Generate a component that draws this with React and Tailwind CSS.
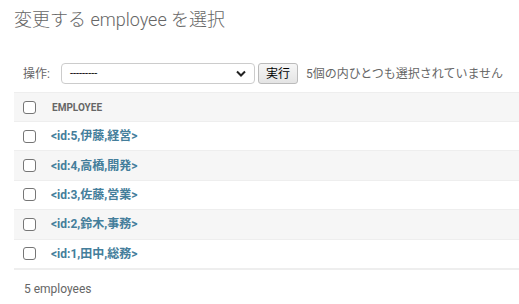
const rows = [
  "<id:5,伊藤,経営>",
  "<id:4,高橋,開発>",
  "<id:3,佐藤,営業>",
  "<id:2,鈴木,事務>",
  "<id:1,田中,総務>",
];

function Box() {
  return <span className="block w-[13px] h-[13px] rounded-[3px] border border-[#767676] bg-white" />;
}

export default function App() {
  return (
    <div className="w-[519px] h-[304px] overflow-hidden bg-white font-['Roboto','Noto_Sans_CJK_JP',sans-serif] text-[12px] text-[#333]">
      <div className="pl-[14px] pt-[9px]">
        <h1 className="text-[18px] leading-[22px] font-light text-[#666] whitespace-nowrap">変更する employee を選択</h1>
      </div>
      <div className="pl-[14px] mt-[32px]">
        <div className="flex items-center h-[21px] pl-[9px] whitespace-nowrap">
          <span className="shrink-0 text-[#666] mr-[11px]">操作:</span>
          <div className="shrink-0 flex items-center justify-between w-[194px] h-[21px] border border-[#ccc] rounded-[4px] px-[8px]">
            <span className="text-[11px] text-black leading-none">---------</span>
            <svg width="10" height="7" viewBox="0 0 10 7">
              <path d="M1 1.5 5 5.5 9 1.5" fill="none" stroke="#222" strokeWidth="2" />
            </svg>
          </div>
          <button className="shrink-0 ml-[3px] h-[21px] w-[40px] border border-[#bbb] rounded-[3px] bg-gradient-to-b from-[#f6f6f6] to-[#e4e4e4] text-black text-[12px] leading-none">実行</button>
          <span className="shrink-0 ml-[8px] text-[#666]">5個の内ひとつも選択されていません</span>
        </div>
        <div className="mt-[8px]">
          <div className="flex items-center h-[30px] bg-[#f6f6f6] border-t border-b border-[#eee]">
            <span className="pl-[9px] pr-[16px]"><Box /></span>
            <span className="text-[10px] font-bold text-[#666]">EMPLOYEE</span>
          </div>
          {rows.map((r, i) => (
            <div key={r} className={`flex items-center h-[29.4px] border-b border-[#eee] ${i % 2 === 1 ? "bg-[#f6f6f6]" : "bg-white"}`}>
              <span className="pl-[9px] pr-[15px]"><Box /></span>
              <a className="font-bold text-[#447e9b]">{r}</a>
            </div>
          ))}
          <div className="h-px bg-[#eee]" />
          <p className="pl-[10px] pt-[10px] text-[#666]">5 employees</p>
        </div>
      </div>
    </div>
  );
}
